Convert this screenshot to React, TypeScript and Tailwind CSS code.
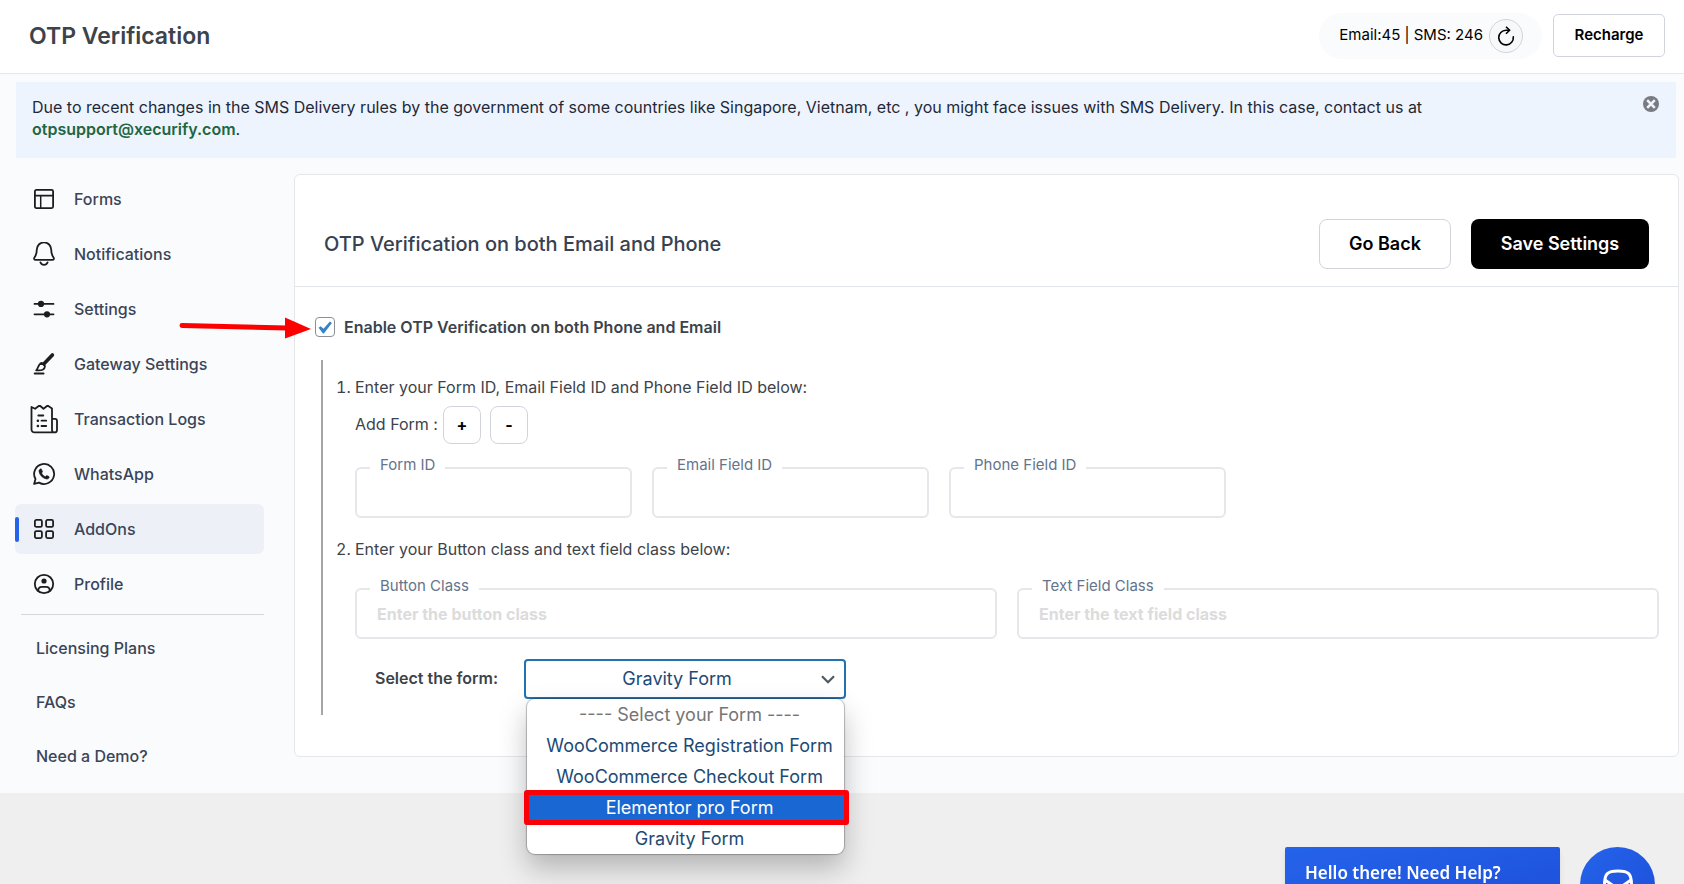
import { useState } from "react";
import type { ReactNode } from "react";

function Svg({ children, size = 24 }: { children: ReactNode; size?: number }) {
  return (
    <svg
      width={size}
      height={size}
      viewBox="0 0 24 24"
      fill="none"
      stroke="currentColor"
      strokeWidth="1.8"
      strokeLinecap="round"
      strokeLinejoin="round"
      aria-hidden="true"
      className="shrink-0"
    >
      {children}
    </svg>
  );
}

const FormsIcon = () => (
  <Svg>
    <rect x="2.9" y="2.9" width="18.2" height="18.2" rx="1.5" />
    <path d="M2.9 8.7h18.2" />
    <path d="M8.700 8.700v12.400" strokeWidth="1.500" />
  </Svg>
);

const BellIcon = () => (
  <Svg>
    <path d="M4.800 7.600a7.200 7.200 0 0 1 14.400 0c0 3.800.8 5.800 2.300 7.800.8 1.200.3 2.500-1 2.500H3.500c-1.300 0-1.800-1.300-1-2.500 1.500-2 2.300-4 2.300-7.800Z" />
    <path d="M8.400 20.400a3.900 3.900 0 0 0 7.200 0" />
  </Svg>
);

const SlidersIcon = () => (
  <Svg>
    <path d="M2.500 6.900h19M2.500 17.300h19" />
    <circle cx="9" cy="6.900" r="2.200" fill="currentColor" />
    <circle cx="15" cy="17.300" r="2.200" fill="currentColor" />
  </Svg>
);

const BrushIcon = () => (
  <Svg>
    <path d="M2.600 21.500h9" />
    <path d="M20.400 3 12 11.800" strokeWidth="3.600" />
    <path d="M9.800 10.800 13 14.200c-.3 3.400-2.800 4.700-8.800 4.100 2-1 1.600-6.400 5.600-7.500Z" />
  </Svg>
);

const LogsIcon = () => (
  <svg width="28" height="30" viewBox="0 0 28 30" fill="none" stroke="currentColor" strokeWidth="1.800" strokeLinecap="round" strokeLinejoin="round" aria-hidden="true" className="shrink-0">
    <path d="M24 28.400H4.500A3 3 0 0 1 1.500 25.400V3l3.600 1.800L8.700 2h1.600l3.200 2.800L17 2h1.300l3.700 2.500v21.400a2.500 2.500 0 0 0 5 0v-9a2 2 0 0 0-2-2h-3" />
    <path d="M8.300 11.500h5M11.500 16.700h4.700M11.500 22h4.700" />
    <path d="M7.800 16.700h.2M7.800 22h.2" strokeWidth="2.400" />
  </svg>
);

const WhatsAppIcon = () => (
  <Svg>
    <path d="M2.100 21.900 3.500 17A10 10 0 1 1 7.100 20.600Z" strokeWidth="1.800" />
    <path d="M8.300 7c-.9.500-1.500 1.300-1.300 2.500.7 3.800 3.800 6.800 7.600 7.500 1.200.2 2.100-.4 2.500-1.400l-.1-1-2.200-1.100-1.500 1.200c-1.700-.7-3-2-3.700-3.700l1-1.300L9.300 7Z" fill="currentColor" strokeWidth="0.600" />
  </Svg>
);

const GridIcon = () => (
  <Svg>
    <rect x="2.900" y="2.900" width="7" height="7" rx="1.500" />
    <rect x="14.100" y="2.900" width="7" height="7" rx="1.500" />
    <rect x="2.900" y="14.100" width="7" height="7" rx="1.500" />
    <rect x="14.100" y="14.100" width="7" height="7" rx="1.500" />
  </Svg>
);

const ProfileIcon = () => (
  <Svg>
    <circle cx="12" cy="12" r="9.200" />
    <circle cx="12" cy="9" r="2.600" fill="currentColor" stroke="none" />
    <path d="M6.200 18.800c0-2.600 1.400-4 3.800-4h4c2.400 0 3.800 1.400 3.800 4" />
  </Svg>
);

const RefreshIcon = () => (
  <svg width="18" height="20" viewBox="0 0 18 20" fill="none" stroke="currentColor" strokeWidth="1.600" aria-hidden="true">
    <path d="M16.300 10.800a7.300 7.300 0 1 1-7.300-6.500h3" strokeLinecap="round" />
    <path d="M9 .8 12.600 4.300 9 7.800" />
  </svg>
);

const nav = [
  { label: "Forms", icon: <FormsIcon /> },
  { label: "Notifications", icon: <BellIcon /> },
  { label: "Settings", icon: <SlidersIcon /> },
  { label: "Gateway Settings", icon: <BrushIcon /> },
  { label: "Transaction Logs", icon: <LogsIcon /> },
  { label: "WhatsApp", icon: <WhatsAppIcon /> },
  { label: "AddOns", icon: <GridIcon />, active: true },
  { label: "Profile", icon: <ProfileIcon /> },
];

const links = ["Licensing Plans", "FAQs", "Need a Demo?"];

const formOptions = [
  "WooCommerce Registration Form",
  "WooCommerce Checkout Form",
  "Elementor pro Form",
  "Gravity Form",
];

function Field({ id, label, placeholder }: { id: string; label: string; placeholder?: string }) {
  return (
    <div className="relative">
      <label htmlFor={id} className="absolute -top-3 left-[15px] bg-white px-2.5 text-[15px] leading-5 text-[#64748b]">
        {label}
      </label>
      <input
        id={id}
        type="text"
        placeholder={placeholder}
        className="block h-[51px] w-full rounded-md border-2 border-[#e5e7eb] bg-transparent px-5 text-base font-bold text-gray-700 outline-none placeholder:text-[#dcdcdc]"
      />
    </div>
  );
}

function Sidebar() {
  return (
    <nav className="w-[264px] shrink-0 pl-[15px]">
      <ul className="flex flex-col gap-[5px]">
        {nav.map((item) => (
          <li key={item.label}>
            <a
              href="#"
              className={
                item.active
                  ? "relative flex h-[50px] items-center rounded-md bg-[#edf1f7]"
                  : "relative flex h-[50px] items-center rounded-md"
              }
            >
              {item.active && <span className="absolute left-0 h-[25px] w-1 rounded-xs bg-[#2563eb]" />}
              <span className="flex w-[59px] justify-center pr-0.5 text-[#1d1d1f]">{item.icon}</span>
              <span className="text-base font-medium text-[#3a4557]">{item.label}</span>
            </a>
          </li>
        ))}
      </ul>
      <hr className="mt-[5px] ml-1.5 border-[#d5d7db]" />
      <ul className="flex flex-col pt-1.5">
        {links.map((label) => (
          <li key={label}>
            <a href="#" className="flex h-[54px] items-center pl-[21px] text-base font-medium text-[#3a4557]">
              {label}
            </a>
          </li>
        ))}
      </ul>
    </nav>
  );
}

function FormSelect() {
  const [value, setValue] = useState("Gravity Form");
  return (
    <div className="relative">
      <select
        id="form-select"
        value={value}
        onChange={(e) => setValue(e.target.value)}
        className="block h-10 w-[322px] appearance-none rounded-[4px] border-2 border-[#2271b1] bg-white pr-6 pl-2 text-center text-lg leading-6 text-[#1c4a75] outline-none"
      >
        {formOptions.map((o) => (
          <option key={o}>{o}</option>
        ))}
      </select>
      <svg width="14" height="9" viewBox="0 0 14 9" fill="none" stroke="#50575e" strokeWidth="2.200" className="pointer-events-none absolute top-4 right-[11px]" aria-hidden="true">
        <path d="M1 1.200 7 7.200 13 1.200" />
      </svg>
      <ul
        role="listbox"
        aria-label="Forms"
        className="absolute top-10 left-[3px] z-10 w-[317px] rounded-lg bg-white text-center text-lg shadow-[0_0_1px_1px_rgba(0,0,0,0.25),0_14px_28px_rgba(0,0,0,0.25)]"
      >
        <li className="flex h-[31px] items-center justify-center pl-2 text-[#757575]">---- Select your Form ----</li>
        {formOptions.map((o) => (
          <li
            key={o}
            role="option"
            aria-selected={o === "Elementor pro Form"}
            className={
              o === "Elementor pro Form"
                ? "relative flex h-[31px] items-center justify-center bg-[#1967d2] pl-2 text-white"
                : "flex h-[31px] items-center justify-center pl-2 text-[#1c4a75]"
            }
          >
            {o}
            {o === "Elementor pro Form" && (
              <span className="absolute -inset-y-0.5 -right-[5px] -left-[3px] rounded-[3px] border-[5px] border-[#fb0007]" />
            )}
          </li>
        ))}
      </ul>
    </div>
  );
}

function SettingsCard() {
  const [enabled, setEnabled] = useState(true);
  return (
    <main className="min-w-0 flex-1 rounded-md border border-[#e5e7eb] bg-white">
      <div className="flex items-center justify-between border-b border-[#e2e5ea] pt-[44px] pr-[29px] pb-[17px] pl-[29px]">
        <h2 className="text-xl font-medium text-[#374151]">OTP Verification on both Email and Phone</h2>
        <div className="flex gap-5">
          <button type="button" className="h-[50px] w-[132px] rounded-lg border border-[#d1d5db] bg-white text-lg font-semibold text-black">
            Go Back
          </button>
          <button type="button" className="h-[50px] w-[178px] rounded-lg bg-black text-lg font-semibold text-white">
            Save Settings
          </button>
        </div>
      </div>

      <div className="relative flex items-center gap-[9px] pt-[30px] pl-5">
        <svg width="132" height="24" viewBox="0 0 132 24" className="absolute top-[28px] -left-[116px]" aria-hidden="true">
          <path d="M3 10.500 108 13" stroke="#fe0000" strokeWidth="5" strokeLinecap="round" />
          <path d="M106 2.500v21L132 14Z" fill="#fe0000" />
        </svg>
        <span className="relative size-5">
          <input
            id="enable-otp"
            type="checkbox"
            checked={enabled}
            onChange={(e) => setEnabled(e.target.checked)}
            className="block size-5 appearance-none rounded-[4px] border border-[#8c8f94] bg-white"
          />
          {enabled && (
            <svg viewBox="0 0 20 20" className="pointer-events-none absolute inset-0 size-5" aria-hidden="true">
              <path d="m3.600 10.800 2.100-1.600 2.800 2.600 6.400-7.200 2 1.300-8 10.500H8Z" fill="#3582c4" />
            </svg>
          )}
        </span>
        <label htmlFor="enable-otp" className="text-base leading-5 font-semibold text-[#3c434a]">
          Enable OTP Verification on both Phone and Email
        </label>
      </div>

      <div className="mt-[23px] mb-[41px] ml-[26px] border-l-2 border-[#a5a5a5] pt-[15px] pr-[19px] pb-4 text-[#3c434a]">
        <ol className="list-decimal pl-8">
          <li>
            <p className="leading-[22px]">Enter your Form ID, Email Field ID and Phone Field ID below:</p>
            <div className="mt-2 flex items-center">
              <span className="mr-[5px] pb-0.5">Add Form :</span>
              <button type="button" className="mr-[9px] size-[38px] rounded-lg border border-[#d1d5db] bg-white font-bold text-black">
                +
              </button>
              <button type="button" className="size-[38px] rounded-lg border border-[#d1d5db] bg-white font-bold text-black">
                -
              </button>
            </div>
            <div className="mt-[23px] grid grid-cols-[repeat(3,277px)] gap-5">
              <Field id="form-id" label="Form ID" />
              <Field id="email-field-id" label="Email Field ID" />
              <Field id="phone-field-id" label="Phone Field ID" />
            </div>
          </li>
          <li className="mt-[19px]">
            <p className="leading-[22px]">Enter your Button class and text field class below:</p>
            <div className="mt-7 grid grid-cols-2 gap-5">
              <Field id="button-class" label="Button Class" placeholder="Enter the button class" />
              <Field id="text-field-class" label="Text Field Class" placeholder="Enter the text field class" />
            </div>
          </li>
        </ol>
        <div className="mt-5 flex items-center gap-[26px] pl-[52px]">
          <label htmlFor="form-select" className="pb-0.5 font-semibold">
            Select the form:
          </label>
          <FormSelect />
        </div>
      </div>
    </main>
  );
}

export default function App() {
  return (
    <div className="min-h-screen overflow-x-hidden bg-[#efefef] font-['Inter',sans-serif] text-base">
      <header className="flex h-[74px] items-center justify-between border-b border-[#e5e7eb] bg-white pr-[19px] pb-0.5 pl-[29px]">
        <h1 className="pt-0.5 text-[23px] font-semibold text-[#3c434a]">OTP Verification</h1>
        <div className="flex items-center gap-[11px]">
          <div className="flex h-[46px] items-center gap-1.5 rounded-full bg-[#fafbfc] pr-[19px] pl-5 text-black">
            <span className="text-[15px]">Email:45 | SMS: 246</span>
            <button type="button" aria-label="Refresh" className="flex size-[34px] items-center justify-center rounded-full border border-[#d1d5db] bg-[#f6f8fa]">
              <RefreshIcon />
            </button>
          </div>
          <button type="button" className="h-[43px] w-28 rounded-[5px] border border-[#d1d5db] bg-white text-[15px] font-semibold text-black">
            Recharge
          </button>
        </div>
      </header>

      <div className="bg-[#fafbfd] pt-2 pb-2.5">
        <div className="mr-2 ml-4 flex items-start justify-between bg-[#eef4fe] pt-[14px] pr-[17px] pb-[18px] pl-4">
          <p className="max-w-[1440px] leading-[22px] text-[#1f2937]">
            Due to recent changes in the SMS Delivery rules by the government of some countries like Singapore, Vietnam, etc , you might face issues with SMS Delivery. In this case, contact us at{" "}
            <a href="mailto:otpsupport@xecurify.com" className="font-semibold text-[#1f6643]">
              otpsupport@xecurify.com
            </a>
            .
          </p>
          <button type="button" aria-label="Dismiss" className="text-[#787c82]">
            <svg width="16" height="16" viewBox="0 0 16 16" aria-hidden="true">
              <circle cx="8" cy="8" r="8" fill="currentColor" />
              <path d="m4.200 4.200 7.600 7.600M11.800 4.200l-7.600 7.600" stroke="#eef4fe" strokeWidth="2.600" />
            </svg>
          </button>
        </div>
        <div className="mt-4 mr-[5px] flex items-start gap-[30px]">
          <Sidebar />
          <SettingsCard />
        </div>
      </div>

      <aside className="fixed right-[29px] -bottom-[38px] flex items-start gap-5">
        <div className="h-[75px] w-[275px] rounded-xs bg-linear-to-br from-[#2563eb] to-[#1d4ed8] px-5 pt-3.5 font-['Noto_Sans',sans-serif] text-[17px] leading-6 font-semibold text-white shadow-md">
          Hello there! Need Help?
        </div>
        <button type="button" aria-label="Open chat" className="flex size-[75px] items-start justify-center rounded-full bg-linear-to-br from-[#2563eb] to-[#1d4ed8] pt-[22px] text-white">
          <svg width="32" height="32" viewBox="0 0 32 32" fill="none" stroke="currentColor" strokeWidth="3" aria-hidden="true">
            <path d="M2.500 16C2.500 5 5 2 16 2s13.500 3 13.500 14S27 30 16 30 2.500 27 2.500 16Z" />
            <path d="M3 11 16 20 29 11" />
          </svg>
        </button>
      </aside>
    </div>
  );
}
